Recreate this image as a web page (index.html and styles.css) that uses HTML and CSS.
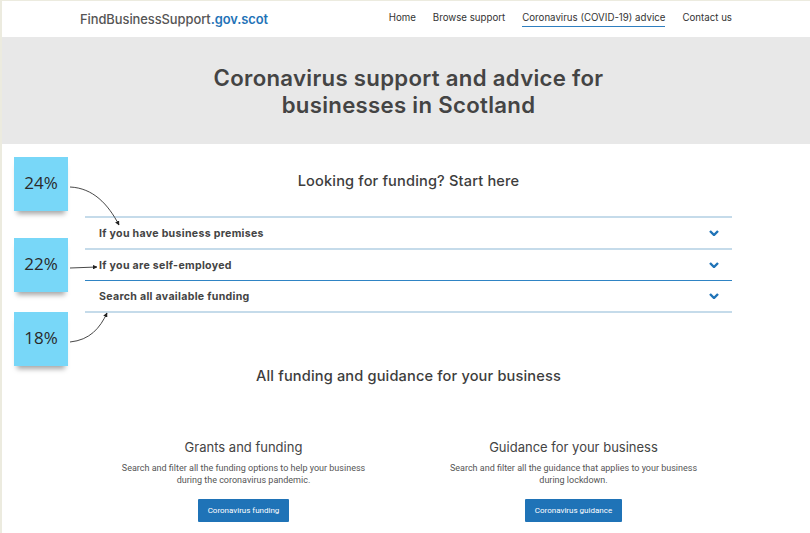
FILE: index.html
```html
<!DOCTYPE html>
<html lang="en">
<head>
<meta charset="utf-8">
<title>Coronavirus support and advice for businesses in Scotland</title>
<link rel="stylesheet" href="styles.css">
</head>
<body>
<div class="frame">
  <header class="site-header">
    <div class="header-inner">
      <a class="logo" href="#">FindBusinessSupport<span class="logo-gov">.gov.scot</span></a>
      <nav class="nav">
        <a href="#">Home</a>
        <a href="#">Browse support</a>
        <a href="#" class="active">Coronavirus (COVID-19) advice</a>
        <a href="#">Contact us</a>
      </nav>
    </div>
  </header>

  <section class="hero">
    <h1>Coronavirus support and advice for<br>businesses in Scotland</h1>
  </section>

  <main class="page">
    <div class="container">
      <h2 class="section-title first">Looking for funding? Start here</h2>
      <div class="accordion">
        <div class="acc-item"><span>If you have business premises</span><svg class="chev" viewBox="0 0 10 6"><path d="M1 1l4 4 4-4" fill="none" stroke="currentColor" stroke-width="2.4"/></svg></div>
        <div class="acc-item focus"><span>If you are self-employed</span><svg class="chev" viewBox="0 0 10 6"><path d="M1 1l4 4 4-4" fill="none" stroke="currentColor" stroke-width="2.4"/></svg></div>
        <div class="acc-item"><span>Search all available funding</span><svg class="chev" viewBox="0 0 10 6"><path d="M1 1l4 4 4-4" fill="none" stroke="currentColor" stroke-width="2.4"/></svg></div>
      </div>

      <h2 class="section-title second">All funding and guidance for your business</h2>

      <div class="cards">
        <div class="card">
          <h3>Grants and funding</h3>
          <p>Search and filter all the funding options to help your business<br>during the coronavirus pandemic.</p>
          <a class="btn" href="#">Coronavirus funding</a>
        </div>
        <div class="card">
          <h3>Guidance for your business</h3>
          <p>Search and filter all the guidance that applies to your business<br>during lockdown.</p>
          <a class="btn" href="#">Coronavirus guidance</a>
        </div>
      </div>
    </div>
  </main>

  <div class="note note-1">24%</div>
  <div class="note note-2">22%</div>
  <div class="note note-3">18%</div>
  <svg class="arrows" width="810" height="533" viewBox="0 0 810 533">
    <defs>
      <marker id="ah" viewBox="0 0 10 10" refX="9" refY="5" markerWidth="5" markerHeight="5" orient="auto">
        <path d="M0 0L10 5L0 10z" fill="#222"/>
      </marker>
    </defs>
    <path d="M70 187 C 93 188, 108 204, 119 225" fill="none" stroke="#333" stroke-width="0.9" marker-end="url(#ah)"/>
    <path d="M70 268 L 97 267" fill="none" stroke="#333" stroke-width="0.9" marker-end="url(#ah)"/>
    <path d="M70 342 C 90 340, 100 328, 107 313" fill="none" stroke="#333" stroke-width="0.9" marker-end="url(#ah)"/>
  </svg>
</div>
</body>
</html>
```

FILE: styles.css
```css
* { box-sizing: border-box; }
html, body { margin: 0; padding: 0; }
body {
  background: #ffffff;
  font-family: "Inter", "Liberation Sans", sans-serif;
  color: #444;
  width: 810px;
  height: 533px;
  overflow: hidden;
}
.frame {
  position: relative;
  border-top: 1px solid #ecebdf;
  border-left: 2px solid #ecebdf;
  height: 533px;
  overflow: hidden;
}
a { text-decoration: none; color: inherit; }

.site-header {
  height: 36px;
  background: #fff;
}
.header-inner {
  display: flex;
  align-items: center;
  justify-content: space-between;
  height: 36px;
  margin-left: 78px;
  width: 652px;
}
.logo {
  font-size: 12.9px;
  font-weight: 500;
  color: #555;
  letter-spacing: -0.05px;
}
.logo-gov { color: #1f73b7; font-weight: 600; }
.nav { display: flex; gap: 17px; align-items: center; }
.nav a {
  font-size: 9.7px;
  color: #333;
  padding-bottom: 2px;
  border-bottom: 1px solid transparent;
  line-height: 12px;
}
.nav a.active { border-bottom-color: #2f7fc0; }

.hero {
  background: #e8e8e8;
  height: 107px;
  padding: 0 0 0 5px;
  display: flex;
  align-items: flex-start;
  justify-content: center;
}
.hero h1 {
  margin: 27px 0 0;
  font-size: 22.2px;
  line-height: 27px;
  font-weight: 600;
  color: #444;
  text-align: center;
  letter-spacing: 0.3px;
}

.page { padding-left: 5px; }
.container { width: 647px; margin: 0 auto; }

.section-title {
  margin: 0;
  text-align: center;
  font-size: 14.6px;
  font-weight: 500;
  color: #3d3d3d;
  line-height: 18px;
  letter-spacing: 0.15px;
}
.section-title.first { padding-top: 28px; height: 72px; }
.section-title.second { margin-top: 54px; font-size: 14.6px; letter-spacing: 0.15px; }

.accordion { border-top: 2px solid #c5dbea; }
.acc-item {
  height: 32px;
  display: flex;
  align-items: center;
  justify-content: space-between;
  padding: 0 13px 0 14px;
  border-bottom: 2px solid #c5dbea;
  font-size: 10.6px;
  font-weight: 700;
  color: #444;
  letter-spacing: 0.3px;
}
.acc-item.focus { height: 31px; border-bottom: 1px solid #2f84c4; }
.chev { width: 10px; height: 6px; color: #1f73b7; }

.cards {
  display: grid;
  grid-template-columns: 317px 317px;
  gap: 13px;
  margin-top: 54px;
}
.card { text-align: center; display: flex; flex-direction: column; align-items: center; }
.card h3 {
  margin: 0;
  font-size: 13px;
  font-weight: 400;
  color: #444;
  line-height: 16px;
}
.card p {
  margin: 7px 0 0;
  font-family: "Roboto", "Liberation Sans", sans-serif;
  font-size: 9px;
  line-height: 12px;
  color: #555;
  white-space: nowrap;
}
.btn {
  margin-top: 13px;
  display: inline-block;
  background: #1f73b7;
  color: #fff;
  font-family: "Roboto", "Liberation Sans", sans-serif;
  font-size: 8px;
  line-height: 23px;
  height: 23px;
  padding: 0 10px;
  border-radius: 1px;
}

.note {
  position: absolute;
  left: 12px;
  width: 54px;
  height: 54px;
  padding-bottom: 3px;
  background: #78d7f8;
  display: flex;
  align-items: center;
  justify-content: center;
  font-family: "Open Sans", "Noto Sans", sans-serif;
  font-size: 17px;
  color: #2a2a2a;
  box-shadow: 0 6px 5px -3px rgba(0,0,0,0.35);
}
.note-1 { top: 156px; }
.note-2 { top: 237px; }
.note-3 { top: 311px; }
.arrows { position: absolute; left: -2px; top: -1px; pointer-events: none; }
```
